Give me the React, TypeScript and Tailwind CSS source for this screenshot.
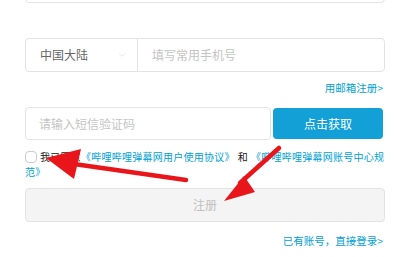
import { ChevronDown } from 'lucide-react';

const cjk = { fontFamily: '"Noto Sans CJK SC", "Liberation Sans", sans-serif' };

function Arrows() {
  return (
    <svg
      className="pointer-events-none absolute left-0 top-0"
      width="400"
      height="257"
      viewBox="0 0 400 257"
    >
      {/* arrow pointing at the checkbox */}
      <line x1="186" y1="180" x2="74" y2="164" stroke="#e8161b" strokeWidth="4.5" strokeLinecap="round" />
      <polygon points="46,158 81,149 74,179" fill="#e8161b" />
      {/* arrow pointing at the register button */}
      <line x1="279" y1="148" x2="240" y2="183" stroke="#e8161b" strokeWidth="4.5" strokeLinecap="round" />
      <polygon points="224,201 244,176 255,192" fill="#e8161b" />
    </svg>
  );
}

export default function App() {
  return (
    <div className="relative h-[257px] w-[400px] overflow-hidden bg-white" style={cjk}>
      <div className="ml-[25px] w-[360px]">
        <div className="mt-[-33px] h-[36px] rounded border border-[#e3e3e3]" />

        <div className="mt-[35px] flex h-[34px] rounded border border-[#e3e3e3]">
          <div className="flex w-[112px] items-center justify-between border-r border-[#e3e3e3] pl-[14px] pr-[10px]">
            <span className="text-[12px] text-[#666]">中国大陆</span>
            <ChevronDown size={10} strokeWidth={1.25} className="text-[#c8c8c8]" />
          </div>
          <div className="flex flex-1 items-center pl-[14px] text-[12px] text-[#c4c4c4]">
            填写常用手机号
          </div>
        </div>

        <div className="mt-[8px] pr-[2px] text-right text-[10.5px] leading-[16px] text-[#00a1d6]">
          用邮箱注册&gt;
        </div>

        <div className="mt-[11px] flex h-[33px] gap-[2px]">
          <div className="flex flex-1 items-center rounded border border-[#e3e3e3] pl-[13px] text-[12px] text-[#c4c4c4]">
            请输入短信验证码
          </div>
          <button className="my-[1px] mr-[2px] w-[110px] rounded bg-[#12a0d7] text-[12px] text-white">
            点击获取
          </button>
        </div>

        <div className="mt-[9px] text-[10px] leading-[15px] tracking-[0.25px] text-[#222]">
          <span className="mr-[3px] inline-block h-[12px] w-[12px] translate-y-[2px] rounded-sm border border-[#ccc] bg-white align-baseline" />
          我已同意
          <span className="text-[#00a1d6]">《哔哩哔哩弹幕网用户使用协议》</span>
          <span className="mx-[3px]">和</span>
          <span className="text-[#00a1d6]">《哔哩哔哩弹幕网账号中心规范》</span>
        </div>

        <div className="mt-[9px] flex h-[34px] items-center justify-center rounded border border-[#e3e3e3] bg-[#f4f4f4] text-[12px] text-[#c0c0c0]">
          注册
        </div>

        <div className="mt-[11px] pr-[2px] text-right text-[10.5px] leading-[16px] text-[#00a1d6]">
          已有账号，直接登录&gt;
        </div>
      </div>
      <Arrows />
    </div>
  );
}
